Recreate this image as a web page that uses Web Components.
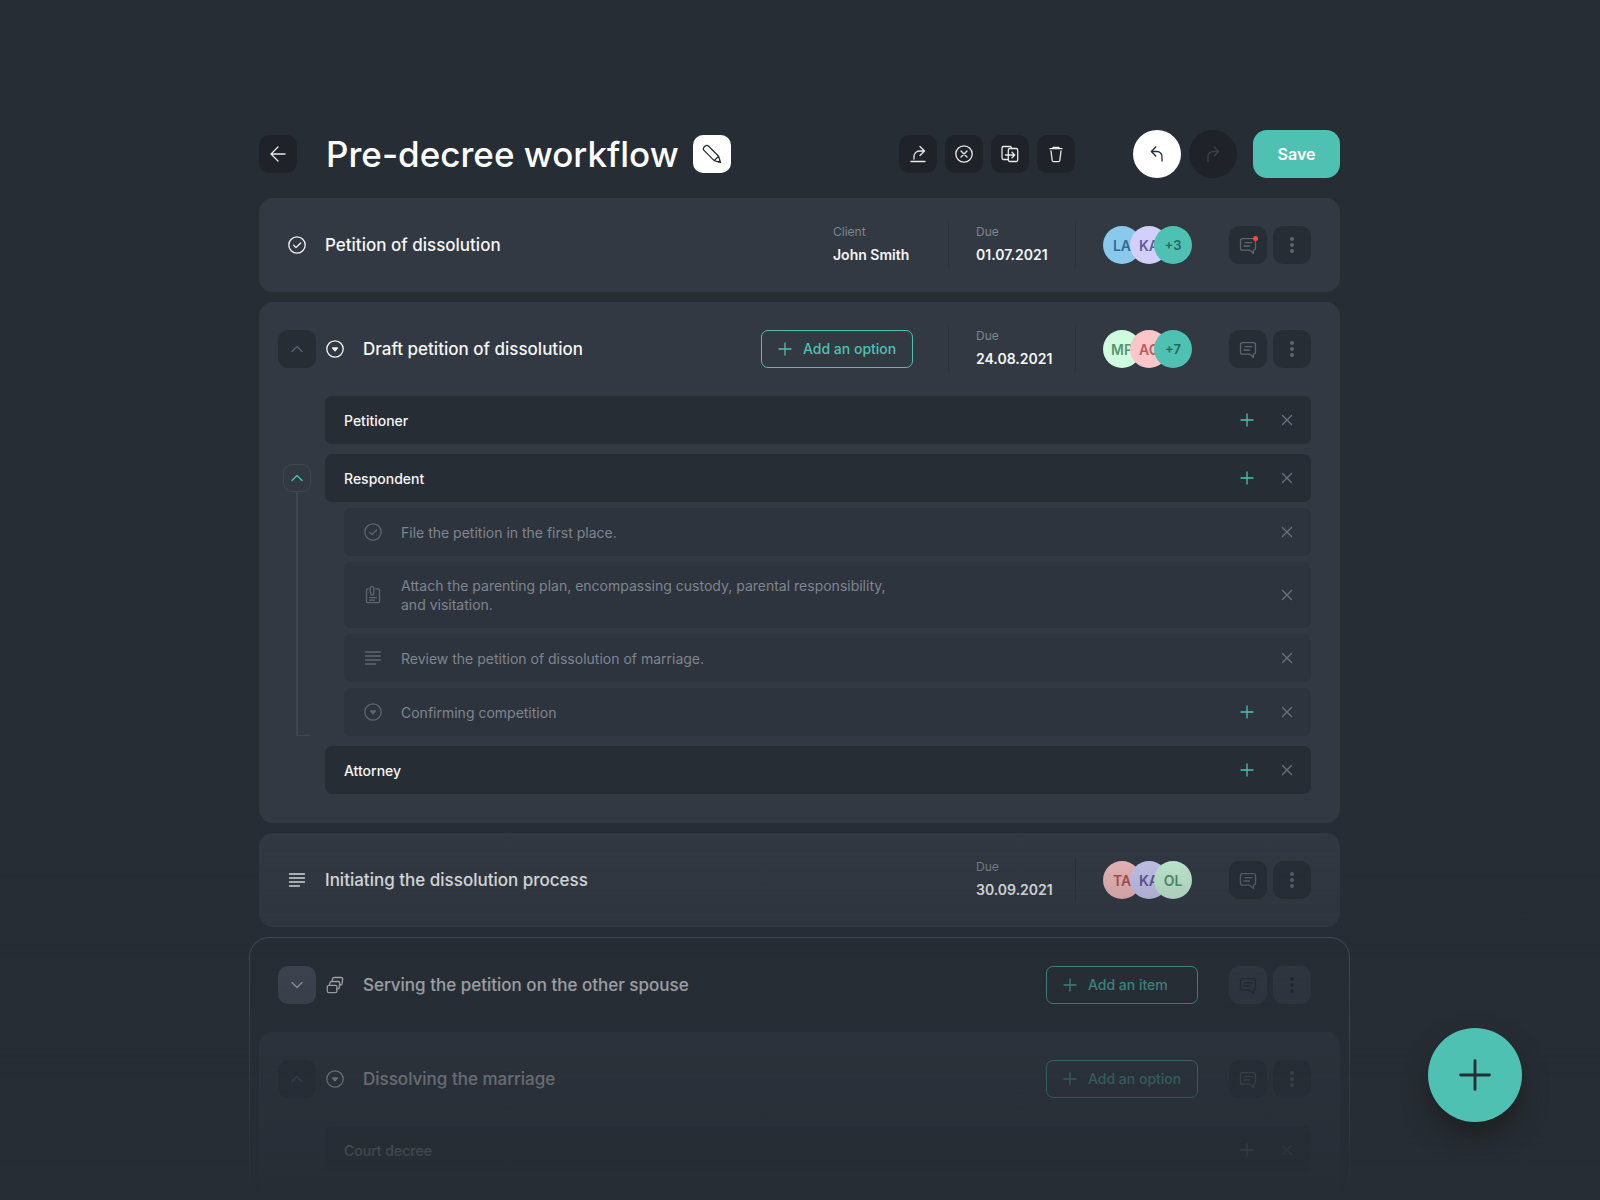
<!DOCTYPE html>
<html lang="en">
<head>
<meta charset="utf-8">
<meta name="viewport" content="width=device-width, initial-scale=1">
<title>Pre-decree workflow</title>
<style>
  :root {
    --page: #272d35; --card: #323942; --sub: #2d343e; --ink: #1f2329;
    --teal: #4fc1b2; --text: #f5f6f7; --muted: #7f858f; --dim: #5c6470; --line: #3d4752;
  }
  body { margin: 0; background: var(--page); color: var(--text); font: 14px/19px Inter, "Liberation Sans", sans-serif; }
</style>
</head>
<body>
<workflow-page></workflow-page>

<script>
const ICONS = {
  back: '<path d="M7 0H-7M0-7L-7 0L0 7"/>',
  pencil: '<path d="M8.5 8.5L6.6 2.2L-3.6-8a2.2 2.2 0 0 0-3.2 0L-8-6.8a2.2 2.2 0 0 0 0 3.2L2.2 6.6ZM2.2 6.6L6.6 2.2M6.6 8.2L8.2 6.6"/>',
  share: '<path d="M-7 7.5H7M-4 5V2.5A5.5 5.5 0 0 1 1.5-3H6.5M2-7.5L6.5-3L2 1.5"/>',
  cancel: '<circle r="8.2"/><path d="M-3-3L3 3M3-3L-3 3"/>',
  copy: '<path d="M-2 5.5H-6.5a1.5 1.5 0 0 1-1.5-1.5V-6a1.5 1.5 0 0 1 1.5-1.5H0A1.5 1.5 0 0 1 1.5-6V-5.5"/><rect x="-1.7" y="-5.5" width="9.4" height="13" rx="1.5"/><path d="M-4.5 1H4.5M2-1.7L4.7 1L2 3.7"/>',
  trash: '<path d="M-6-5.3H6M-3.5-5.3L-3-6.6H3L3.5-5.3M-5-3L-3.8 6.5A1.4 1.4 0 0 0-2.4 7.7H2.4A1.4 1.4 0 0 0 3.8 6.5L5-3"/>',
  undo: '<path d="M-5.5-2.5H0A5 5 0 0 1 5 2.5V7M-1.2-7L-5.7-2.5L-1.2 2"/>',
  redo: '<path d="M5.5-2.5H0A5 5 0 0 0-5 2.5V7M1.2-7L5.7-2.5L1.2 2"/>',
  check: '<circle r="8.2"/><path d="M-3.4.3L-1 2.6L3.6-2"/>',
  option: '<circle r="8.2"/><path fill="currentColor" d="M-2.4-1H2.4L0 1.8Z"/>',
  text: '<path d="M-7.5-6H7.5M-7.5-2H7.5M-7.5 2H7.5M-7.5 6H2.5"/>',
  comment: '<path d="M-5.5-6.4H5.5A2 2 0 0 1 7.5-4.4V3.2A2 2 0 0 1 5.5 5.2V8.5L1.8 5.2H-5.5A2 2 0 0 1-7.5 3.2V-4.4A2 2 0 0 1-5.5-6.4ZM-3-2.3H4M-4 1H1.5"/>',
  dots: '<g fill="currentColor" stroke="none"><circle cy="-6" r="2"/><circle r="2"/><circle cy="6" r="2"/></g>',
  stack: '<rect x="-7.7" y=".4" width="9.6" height="7.2" rx="1.6"/><path d="M-5.6.2L-5-2.2A1.6 1.6 0 0 1-3.4-3.5H3.2A1.6 1.6 0 0 1 4.8-1.9L4.3 2.4A1.6 1.6 0 0 1 2.8 3.8H2M-3.1-3.7L-2.4-6.3A1.6 1.6 0 0 1-.8-7.5H6.1A1.6 1.6 0 0 1 7.7-5.9L7.1-1.4A1.6 1.6 0 0 1 5.5 0H4.8"/>',
  clip: '<path d="M-4.7-6.2H-5.2a1.3 1.3 0 0 0-1.3 1.3V6.4a1.3 1.3 0 0 0 1.3 1.3H5.2a1.3 1.3 0 0 0 1.3-1.3V-4.9a1.3 1.3 0 0 0-1.3-1.3H2.6M-3.3 2.6H3.4M-3.3 5.2H1.4M-2.8-3V-6.6a1.8 1.8 0 0 1 3.6 0V-1.6a1.6 1.6 0 0 1-3.2 0V-2.6"/>',
  up: '<path d="M-5 2.5L0-2.5L5 2.5"/>',
  down: '<path d="M-5-2.5L0 2.5L5-2.5"/>',
  plus: '<path d="M-6 0H6M0-6V6"/>',
  close: '<path d="M-4.5-4.5L4.5 4.5M4.5-4.5L-4.5 4.5"/>'
};

class Part extends HTMLElement {
  connectedCallback() {
    if (this.shadowRoot) return;
    this.attachShadow({ mode: 'open' }).innerHTML = `<style>*{box-sizing:border-box}${this.css()}</style>${this.html()}`;
  }
  a(name, fallback = '') { return this.getAttribute(name) ?? fallback; }
}

customElements.define('wf-icon', class extends Part {
  css() { return `:host{display:block;flex:none;width:20px;height:20px}
    svg{display:block;width:100%;height:100%;overflow:visible;fill:none;stroke:currentColor;stroke-width:var(--stroke,1.3);stroke-linecap:round;stroke-linejoin:round}`; }
  html() { return `<svg viewBox="-10 -10 20 20" aria-hidden="true">${ICONS[this.a('name')]}</svg>`; }
});

/* Square or round button that holds one icon. */
customElements.define('wf-icon-button', class extends Part {
  css() { return `:host{display:block;flex:none;--size:38px;--bg:var(--page);--fg:var(--dim);--radius:10px}
    :host([kind=tool]){--bg:var(--ink);--fg:#e8eaec}
    :host([kind=light]){--bg:#fff;--fg:#272d35}
    :host([kind=raised]){--bg:#4a515f;--fg:#d5d8dc}
    :host([kind=ghost]){--bg:#343b45;--fg:#1f252c}
    :host([round]){--size:48px;--radius:50%}
    :host([kind=off]){--bg:var(--ink);--fg:#3c4148}
    :host([kind=tree]){--size:28px;--bg:transparent;--fg:var(--teal);--edge:1px solid var(--line);--radius:9px}
    :host([kind=add]),:host([kind=remove]){--size:20px;--bg:transparent;--fg:var(--teal)}
    :host([kind=remove]){--fg:#69717c}
    button{position:relative;display:grid;place-items:center;width:var(--size);height:var(--size);padding:0;border:var(--edge,0);border-radius:var(--radius);background:var(--bg);color:var(--fg);cursor:pointer}
    i{position:absolute;top:10px;right:9px;width:5px;height:5px;border-radius:50%;background:#ff4a2e}`; }
  html() { return `<button type="button" aria-label="${this.a('label')}"><wf-icon name="${this.a('icon')}"></wf-icon>${this.hasAttribute('alert') ? '<i></i>' : ''}</button>`; }
});

customElements.define('wf-add-button', class extends Part {
  css() { return `:host{display:block;flex:none}
    button{display:flex;align-items:center;gap:8px;width:152px;height:38px;padding:0 13px;border:1px solid var(--teal);border-radius:7px;background:transparent;color:var(--teal);font:500 14px/20px Inter,"Liberation Sans",sans-serif;cursor:pointer}`; }
  html() { return `<button type="button"><wf-icon name="plus"></wf-icon><slot></slot></button>`; }
});

customElements.define('wf-meta', class extends Part {
  css() { return `:host{display:block;flex:none;white-space:nowrap}
    dl{margin:0}
    dt{font-size:12px;line-height:18px;color:var(--muted)}
    dd{margin:4px 0 0;padding-bottom:2px;font-size:14px;line-height:20px;font-weight:600}`; }
  html() { return `<dl><dt>${this.a('label')}</dt><dd><slot></slot></dd></dl>`; }
});

customElements.define('wf-avatar', class extends Part {
  css() { return `:host{display:grid;place-items:center;width:38px;height:38px;border-radius:50%;font-size:14px;font-weight:600;background:var(--teal);color:#22695f}
    :host([tone=sky]){background:#8ac9ec;color:#2b6c92}
    :host([tone=lilac]){background:#d2d0fb;color:#5e5a9c}
    :host([tone=mint]){background:#cffbdf;color:#579570}
    :host([tone=rose]){background:#fbc6c7;color:#b85c60}
    :host([tone=coral]){background:#fbc2c3;color:#b94f55}
    :host([tone=more]){font-size:13px}`; }
  html() { return `<slot></slot>`; }
});

/* Due date and assigned people of a card's head. */
customElements.define('wf-people', class extends Part {
  css() { return `:host{display:flex;align-items:center;flex:none;height:44px;margin-right:37px}
    .due{align-self:stretch;display:flex;align-items:center;width:128px;padding-left:28px;border:solid #2a3038;border-width:0 1px 0 0}
    :host([split]) .due{border-left-width:1px;padding-left:27px}
    .faces{display:flex;margin-left:27px}
    .faces ::slotted(:nth-child(2)){margin-left:-11px}
    .faces ::slotted(:nth-child(3)){margin-left:-14px}`; }
  html() { return `<div class="due"><wf-meta label="Due">${this.a('due')}</wf-meta></div><div class="faces"><slot></slot></div>`; }
});

customElements.define('wf-actions', class extends Part {
  css() { return `:host{display:flex;gap:6px;flex:none}`; }
  html() {
    const kind = this.a('kind');
    return `<wf-icon-button kind="${kind}" icon="comment" label="Comments" ${this.hasAttribute('alert') ? 'alert' : ''}></wf-icon-button>
      <wf-icon-button kind="${kind}" icon="dots" label="More"></wf-icon-button>`;
  }
});

customElements.define('wf-head', class extends Part {
  css() { return `:host{display:flex;align-items:center;box-sizing:border-box;min-height:94px;padding:0 29px 0 19px}
    wf-icon{margin:0 18px 0 9px}
    h2{flex:1;margin:0;font-size:17px;line-height:24px;font-weight:500}`; }
  html() { return `<slot name="toggle"></slot><wf-icon name="${this.a('icon')}"></wf-icon><h2>${this.a('title')}</h2><slot></slot>`; }
});

customElements.define('wf-card', class extends Part {
  css() { return `:host{display:block;border-radius:14px;background:var(--card)}
    :host([outline]){margin:0 -10px;padding:0 9px;border:1px solid #4c5561;border-radius:20px;background:none}`; }
  html() { return `<slot></slot>`; }
});

customElements.define('wf-bar', class extends Part {
  css() { return `:host{display:flex;align-items:center;gap:20px;min-height:48px;padding:0 14px 0 19px;border-radius:7px;background:var(--page);font-weight:500}
    :host([icon]){gap:18px;background:var(--sub);color:var(--muted);font-weight:400;--i:#5c6672}
    wf-icon{color:var(--i)}
    p{flex:1;margin:0;padding:14px 0}
    p span{display:block;max-width:490px}
    .tools{display:flex;gap:20px}`; }
  html() {
    const icon = this.a('icon');
    return `${icon ? `<wf-icon name="${icon}"></wf-icon>` : ''}<p><span><slot></slot></span></p><div class="tools">
      ${this.hasAttribute('addable') ? '<wf-icon-button kind="add" icon="plus" label="Add"></wf-icon-button>' : ''}
      <wf-icon-button kind="remove" icon="close" label="Remove"></wf-icon-button></div>`;
  }
});

/* Bars under a card's head, with room at the left for the tree line. */
customElements.define('wf-body', class extends Part {
  css() { return `:host{display:grid;gap:10px;padding:0 29px 29px 66px}
    :host([last]){padding-bottom:22px}`; }
  html() { return `<slot></slot>`; }
});

customElements.define('wf-branch', class extends Part {
  css() { return `:host{display:grid;grid-template-columns:28px 1fr;column-gap:14px;margin-left:-42px}
    .rail{display:flex;flex-direction:column;padding-top:10px}
    .rail span{flex:1;margin-left:13px;border:solid var(--line);border-width:0 0 1px 2px}
    .rows{display:grid;gap:6px}
    .rows ::slotted([icon]){margin-left:19px}`; }
  html() { return `<div class="rail"><wf-icon-button kind="tree" icon="up" label="Collapse"></wf-icon-button><span></span></div><div class="rows"><slot></slot></div>`; }
});

customElements.define('workflow-page', class extends Part {
  css() { return `:host{display:block;padding:130px 24px 0 23px}
    main{display:grid;gap:10px;max-width:1081px;margin:0 auto}
    header{display:flex;align-items:center;height:48px;margin-bottom:10px}
    h1{margin:0 14px 0 29px;font-size:35px;line-height:48px;font-weight:500;color:#fff}
    .tools{display:flex;gap:8px;margin-left:auto}
    .history{display:flex;gap:8px;margin:0 16px 0 58px}
    .save{width:87px;height:48px;border:0;border-radius:14px;background:var(--teal);color:#fff;font:600 16px/24px Inter,"Liberation Sans",sans-serif;cursor:pointer}
    .wide{margin-right:35px}
    .near{margin-right:31px}
    .client{width:80px}
    .fade{position:fixed;inset:auto 0 0;height:385px;pointer-events:none;background:linear-gradient(rgba(39,45,53,0),rgba(39,45,53,.69) 264px,rgba(39,45,53,.87) 336px,var(--page))}
    .fab{position:fixed;right:78px;bottom:78px;display:grid;place-items:center;width:94px;height:94px;padding:0;border:0;border-radius:50%;background:var(--teal);color:#272d35;box-shadow:0 14px 24px rgba(28,30,28,.75);cursor:pointer}
    .fab wf-icon{width:48px;height:48px;--stroke:1.2}`; }
  html() { return `
    <main>
      <header>
        <wf-icon-button kind="tool" icon="back" label="Back"></wf-icon-button>
        <h1>Pre-decree workflow</h1>
        <wf-icon-button kind="light" icon="pencil" label="Rename"></wf-icon-button>
        <div class="tools">
          <wf-icon-button kind="tool" icon="share" label="Share"></wf-icon-button>
          <wf-icon-button kind="tool" icon="cancel" label="Cancel"></wf-icon-button>
          <wf-icon-button kind="tool" icon="copy" label="Duplicate"></wf-icon-button>
          <wf-icon-button kind="tool" icon="trash" label="Delete"></wf-icon-button>
        </div>
        <div class="history">
          <wf-icon-button round kind="light" icon="undo" label="Undo"></wf-icon-button>
          <wf-icon-button round kind="off" icon="redo" label="Redo"></wf-icon-button>
        </div>
        <button class="save" type="button">Save</button>
      </header>

      <wf-card>
        <wf-head icon="check" title="Petition of dissolution">
          <wf-meta class="client wide" label="Client">John Smith</wf-meta>
          <wf-people split due="01.07.2021"><wf-avatar tone="sky">LA</wf-avatar><wf-avatar tone="lilac">KA</wf-avatar><wf-avatar tone="more">+3</wf-avatar></wf-people>
          <wf-actions alert></wf-actions>
        </wf-head>
      </wf-card>

      <wf-card>
        <wf-head icon="option" title="Draft petition of dissolution">
          <wf-icon-button slot="toggle" icon="up" label="Collapse"></wf-icon-button>
          <wf-add-button class="wide">Add an option</wf-add-button>
          <wf-people split due="24.08.2021"><wf-avatar tone="mint">MP</wf-avatar><wf-avatar tone="rose">AC</wf-avatar><wf-avatar tone="more">+7</wf-avatar></wf-people>
          <wf-actions></wf-actions>
        </wf-head>
        <wf-body>
          <wf-bar addable>Petitioner</wf-bar>
          <wf-branch>
            <wf-bar addable>Respondent</wf-bar>
            <wf-bar icon="check">File the petition in the first place.</wf-bar>
            <wf-bar icon="clip">Attach the parenting plan, encompassing custody, parental responsibility, and visitation.</wf-bar>
            <wf-bar icon="text">Review the petition of dissolution of marriage.</wf-bar>
            <wf-bar icon="option" addable>Confirming competition</wf-bar>
          </wf-branch>
          <wf-bar addable>Attorney</wf-bar>
        </wf-body>
      </wf-card>

      <wf-card>
        <wf-head icon="text" title="Initiating the dissolution process">
          <wf-people due="30.09.2021"><wf-avatar tone="coral">TA</wf-avatar><wf-avatar tone="lilac">KA</wf-avatar><wf-avatar tone="mint">OL</wf-avatar></wf-people>
          <wf-actions></wf-actions>
        </wf-head>
      </wf-card>

      <wf-card outline>
        <wf-head icon="stack" title="Serving the petition on the other spouse">
          <wf-icon-button slot="toggle" kind="raised" icon="down" label="Expand"></wf-icon-button>
          <wf-add-button class="near">Add an item</wf-add-button>
          <wf-actions kind="ghost"></wf-actions>
        </wf-head>
        <wf-card>
          <wf-head icon="option" title="Dissolving the marriage">
            <wf-icon-button slot="toggle" icon="up" label="Collapse"></wf-icon-button>
            <wf-add-button class="near">Add an option</wf-add-button>
            <wf-actions></wf-actions>
          </wf-head>
          <wf-body last><wf-bar addable>Court decree</wf-bar></wf-body>
        </wf-card>
      </wf-card>
    </main>
    <div class="fade"></div>
    <button class="fab" type="button" aria-label="Add step"><wf-icon name="plus"></wf-icon></button>`; }
});
</script>
</body>
</html>
